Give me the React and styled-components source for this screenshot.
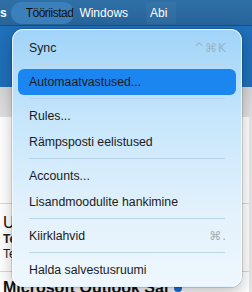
import styled, { createGlobalStyle } from "styled-components";

const GlobalStyle = createGlobalStyle`
  html, body {
    margin: 0;
    padding: 0;
    overflow: hidden;
    background: #ffffff;
    font-family: "Liberation Sans", "DejaVu Sans", Arial, sans-serif;
  }
`;

// Akna raam
const Window = styled.div`
  position: relative;
  width: 252px;
  height: 292px;
  display: flex;
  flex-direction: column;
  overflow: hidden;
`;

// Ülemine menüüriba
const MenuBar = styled.div`
  height: 27px;
  display: flex;
  align-items: center;
  background: linear-gradient(#2e70a7, #27649a);
  border-bottom: 1px solid #1c4f7c;
  color: #ffffff;
  font-size: 12px;
`;

const BarItem = styled.div`
  height: 22px;
  display: flex;
  align-items: center;
  margin-left: ${(p) => p.gap || 0}px;
  padding: ${(p) => (p.active ? "0 1px 0 15px" : p.boxed ? "0 9px 0 4px" : "0")};
  border-radius: ${(p) => (p.active ? "11px" : "2px")};
  background: ${(p) =>
    p.active ? "#3c80bb" : p.boxed ? "rgba(255,255,255,0.04)" : "transparent"};
  color: ${(p) => (p.active ? "#111111" : "#ffffff")};
  letter-spacing: ${(p) => (p.active ? "-0.5px" : "0")};
  font-weight: ${(p) => (p.bold ? "bold" : "normal")};
`;

// Tööriistariba akna all
const Toolbar = styled.div`
  height: 65px;
  background: #1f6fba;
`;

const FilterBar = styled.div`
  height: 32px;
  background: linear-gradient(#d4d4d4, #e2e2e2);
`;

const MessageList = styled.div`
  flex: 1;
  background: #ffffff;
  border-right: 3px solid #e6e6e6;
`;

const MessageRow = styled.div`
  height: ${(p) => p.h}px;
  padding: ${(p) => p.pad || "0 3px"};
  border-bottom: ${(p) => (p.last ? "none" : "1px solid #d8d8d8")};
  box-sizing: border-box;
  display: flex;
  flex-direction: column;
  white-space: nowrap;
`;

const Sender = styled.div`
  font-size: 16px;
  line-height: 20px;
  color: #111;
`;

const Subject = styled.div`
  font-size: 12px;
  line-height: 13px;
  margin-top: ${(p) => (p.bold ? 0 : 2)}px;
  font-weight: ${(p) => (p.bold ? "bold" : "normal")};
  color: #222;
`;

const BoldSender = styled.div`
  font-size: 16px;
  font-weight: bold;
  color: #111;
  display: flex;
  align-items: center;
  gap: 6px;
`;

const Dot = styled.span`
  width: 8px;
  height: 8px;
  border-radius: 50%;
  background: #1a6fd8;
`;

// Rippmenüü
const Dropdown = styled.div`
  position: absolute;
  left: 12px;
  top: 29px;
  width: 230px;
  box-sizing: border-box;
  padding: 5px 5px 3px;
  border-radius: 11px;
  background: linear-gradient(#a0d4f8 0%, #c6e6fb 35%, #e2f1fc 70%, #eef7fd 100%);
  border: 1px solid rgba(255, 255, 255, 0.7);
  box-shadow: 0 0 0 0.5px rgba(0, 0, 0, 0.25), 0 6px 16px rgba(0, 0, 0, 0.25);
`;

const Item = styled.div`
  height: 26px;
  display: flex;
  align-items: center;
  justify-content: space-between;
  padding: 0 9px 0 11px;
  border-radius: 6px;
  font-size: 12.3px;
  color: #1b1b22;
  background: ${(p) => (p.selected ? "#1b86f0" : "transparent")};
`;

const Shortcut = styled.span`
  font-family: "DejaVu Sans", "Liberation Sans", sans-serif;
  font-size: 12px;
  letter-spacing: 1px;
  color: ${(p) => p.color || "#98b4c8"};
`;

const Separator = styled.div`
  height: 1px;
  margin: 3px 11px 4px;
  background: #b9d5e8;
`;

const menu = [
  { label: "Sync", shortcut: "^⌘K" },
  "sep",
  { label: "Automaatvastused...", selected: true },
  "sep",
  { label: "Rules..." },
  { label: "Rämpsposti eelistused" },
  "sep",
  { label: "Accounts..." },
  { label: "Lisandmoodulite hankimine" },
  "sep",
  { label: "Kiirklahvid", shortcut: "⌘.", color: "#a4acb4" },
  "sep",
  { label: "Halda salvestusruumi" },
];

export default function App() {
  return (
    <Window>
      <GlobalStyle />
      <MenuBar>
        <BarItem bold>s</BarItem>
        <BarItem active gap={4}>Tööriistad</BarItem>
        <BarItem gap={5}>Windows</BarItem>
        <BarItem boxed gap={18}>Abi</BarItem>
      </MenuBar>
      <Toolbar />
      <FilterBar />
      <MessageList>
        <MessageRow h={87} />
        <MessageRow h={68} pad="9px 3px 0">
          <Sender>Uus</Sender>
          <Subject bold>Teavitus</Subject>
          <Subject>Tere</Subject>
        </MessageRow>
        <MessageRow h={20} pad="7px 3px 0" last>
          <BoldSender>
            Microsoft Outlook Sal <Dot />
          </BoldSender>
        </MessageRow>
      </MessageList>

      <Dropdown>
        {menu.map((m, i) =>
          m === "sep" ? (
            <Separator key={i} />
          ) : (
            <Item key={i} selected={m.selected}>
              <span>{m.label}</span>
              {m.shortcut && <Shortcut color={m.color}>{m.shortcut}</Shortcut>}
            </Item>
          )
        )}
      </Dropdown>
    </Window>
  );
}
